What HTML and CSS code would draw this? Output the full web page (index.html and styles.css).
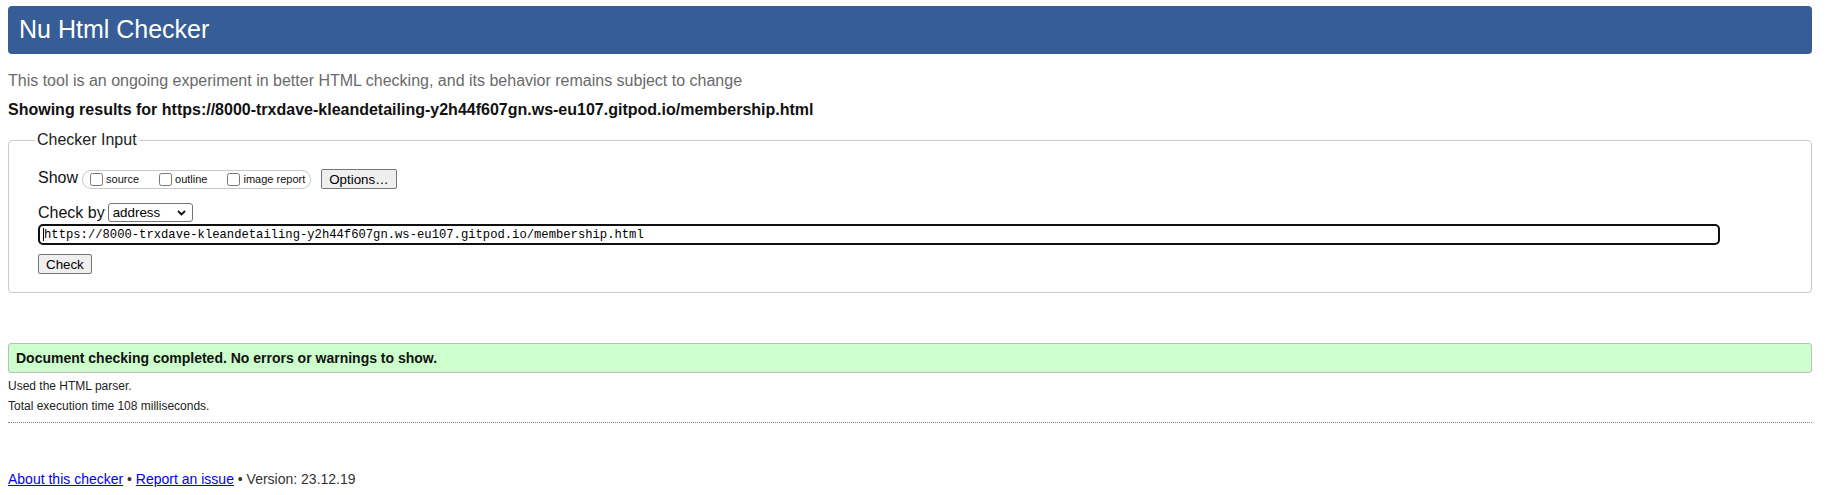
FILE: index.html
```
<!DOCTYPE html>
<html lang="en">
<head>
<meta charset="utf-8">
<title>Nu Html Checker</title>
<link rel="stylesheet" href="styles.css">
</head>
<body>
<h1 class="title">Nu Html Checker</h1>
<p class="intro">This tool is an ongoing experiment in better HTML checking, and its behavior remains subject to change</p>
<p class="results-for">Showing results for https://8000-trxdave-kleandetailing-y2h44f607gn.ws-eu107.gitpod.io/membership.html</p>
<form class="checker-form">
  <fieldset class="input-box">
    <legend class="input-legend">Checker Input</legend>
    <div class="row row-show">
      <span class="row-label">Show</span>
      <span class="opts">
        <label class="opt"><input type="checkbox" class="cb">source</label>
        <label class="opt"><input type="checkbox" class="cb">outline</label>
        <label class="opt opt-last"><input type="checkbox" class="cb">image report</label>
      </span>
      <button type="button" class="btn btn-options">Options…</button>
    </div>
    <div class="row row-checkby">
      <span class="row-label">Check by</span>
      <span class="select-wrap">
        <select class="select"><option>address</option></select>
        <svg class="chev" width="9" height="6" viewBox="0 0 9 6"><path d="M1 1 L4.5 4.5 L8 1" fill="none" stroke="#111" stroke-width="1.8"/></svg>
      </span>
    </div>
    <div class="row row-url">
      <span class="url-wrap">
        <input class="url" type="text" value="https://8000-trxdave-kleandetailing-y2h44f607gn.ws-eu107.gitpod.io/membership.html">
        <span class="caret"></span>
      </span>
    </div>
    <div class="row row-submit">
      <button type="button" class="btn btn-check">Check</button>
    </div>
  </fieldset>
</form>
<p class="success">Document checking completed. No errors or warnings to show.</p>
<p class="info info-first">Used the HTML parser.</p>
<p class="info">Total execution time 108 milliseconds.</p>
<hr class="sep">
<p class="footer"><a href="#" class="flink">About this checker</a> • <a href="#" class="flink">Report an issue</a> • Version: 23.12.19</p>
</body>
</html>
```
FILE: styles.css
```
html, body {
  background: #fff;
}
body {
  margin: 6px 14px 0 8px;
  font-family: "Liberation Sans", Arial, sans-serif;
  color: #111;
}
.title {
  margin: 0;
  height: 48px;
  box-sizing: border-box;
  padding: 9px 11px 11px;
  background: #365d95;
  color: #fff;
  font-size: 25px;
  font-weight: normal;
  line-height: 28px;
  border-radius: 4px;
}
.intro {
  margin: 17.5px 0 0;
  font-size: 16px;
  line-height: 18px;
  color: #6a6a6a;
}
.results-for {
  margin: 11px 0 0;
  font-size: 16px;
  line-height: 18px;
  font-weight: bold;
  color: #111;
}
.checker-form {
  margin: 0;
}
.input-box {
  margin: 12.7px 0 0;
  padding: 0 29px 18px 29px;
  border: 1px solid #cccccc;
  border-radius: 4px;
  min-width: 0;
}
.input-legend {
  margin-left: -3px;
  padding: 0 2px;
  font-size: 16px;
  line-height: 18px;
  color: #222;
}
.row {
  display: flex;
  align-items: center;
}
.row-show {
  margin-top: 20px;
  height: 20px;
}
.row-label {
  font-size: 16px;
  line-height: 18px;
  color: #111;
}
.row-show .row-label {
  margin-bottom: 2px;
}
.opts {
  display: inline-flex;
  align-items: center;
  box-sizing: border-box;
  height: 19px;
  margin-left: 4px;
  padding: 0 5px 0 3px;
  border: 1px solid #c8c8c8;
  border-radius: 9px;
}
.opt {
  display: inline-flex;
  align-items: center;
  font-size: 11px;
  line-height: 13px;
  color: #111;
  margin-right: 16px;
}
.opt-last {
  margin-right: 0;
}
.cb {
  width: 13px;
  height: 13px;
  margin: 0 3px 0 4px;
}
.btn {
  box-sizing: border-box;
  height: 20px;
  padding: 0 7px;
  font-family: "Liberation Sans", Arial, sans-serif;
  font-size: 13.333px;
  color: #000;
  background: #efefef;
  border: 1px solid #767676;
  border-radius: 2px;
}
.btn-options {
  margin-left: 10px;
  padding: 0 7px;
}
.row-checkby {
  margin-top: 14px;
  height: 19px;
}
.select-wrap {
  position: relative;
  display: inline-flex;
  margin-left: 3px;
}
.select {
  appearance: none;
  -webkit-appearance: none;
  box-sizing: border-box;
  width: 85px;
  height: 19px;
  margin: 0;
  padding: 0 20px 0 4px;
  font-family: "Liberation Sans", Arial, sans-serif;
  font-size: 13.333px;
  color: #000;
  background: #fff;
  border: 1px solid #767676;
  border-radius: 3px;
}
.chev {
  position: absolute;
  right: 7px;
  top: 6.5px;
  pointer-events: none;
}
.row-url {
  margin-top: 2px;
}
.url-wrap {
  position: relative;
  display: block;
  width: calc(100% - 62px);
}
.url {
  display: block;
  box-sizing: border-box;
  width: 100%;
  height: 21px;
  margin: 0;
  padding: 0 4px;
  font-family: "Liberation Mono", "DejaVu Sans Mono", monospace;
  font-size: 12.2px;
  color: #000;
  background: #fff;
  border: 2px solid #101010;
  border-radius: 5px;
  outline: none;
}
.caret {
  position: absolute;
  left: 5px;
  top: 4px;
  width: 1px;
  height: 13px;
  background: #000;
}
.row-submit {
  margin-top: 9px;
}
.success {
  margin: 50px 0 0;
  padding: 6px 7px;
  font-size: 14px;
  line-height: 16px;
  font-weight: bold;
  color: #111;
  background: #ccffcc;
  border: 1px solid #bdbdbd;
  border-radius: 3px;
}
.info {
  margin: 6.3px 0 0;
  font-size: 12px;
  line-height: 14px;
  color: #222;
}
.info-first {
  margin-top: 6px;
}
.sep {
  margin: 8.5px 0 0;
  height: 0;
  border: 0;
  border-top: 1px dotted #888;
}
.footer {
  margin: 48px 0 0;
  font-size: 14px;
  line-height: 16px;
  color: #333;
}
.flink {
  color: #0000ee;
}
```
